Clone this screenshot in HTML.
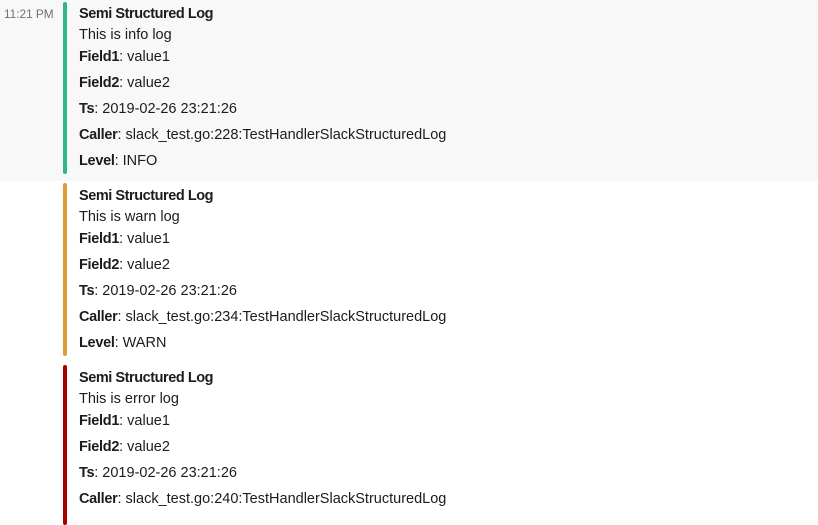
<!DOCTYPE html>
<html><head><meta charset="utf-8"><style>
body{margin:0;width:818px;height:513px;overflow:hidden;background:#fff;font-family:"Liberation Sans",sans-serif;color:#1d1c1d;position:relative}
.bg{position:absolute;left:0;top:0;width:818px;height:181px;background:#f8f8f8}
.time{position:absolute;left:4px;top:7px;font-size:11.8px;color:#717071}
.bar{position:absolute;left:63px;width:4px;border-radius:2px}
.t{position:absolute;left:79px;font-size:14.5px;white-space:nowrap;line-height:18px}
b{font-weight:bold;letter-spacing:-0.3px}
.h b{letter-spacing:-0.45px}
</style></head><body>
<div class="bg"></div>
<div class="time">11:21 PM</div>

<div class="bar" style="top:2px;height:172px;background:#2eb886"></div>
<div class="t h" style="top:5px"><b>Semi Structured Log</b></div>
<div class="t" style="top:26px">This is info log</div>
<div class="t" style="top:48px"><b>Field1</b>: value1</div>
<div class="t" style="top:74px"><b>Field2</b>: value2</div>
<div class="t" style="top:100px"><b>Ts</b>: 2019-02-26 23:21:26</div>
<div class="t" style="top:126px"><b>Caller</b>: slack_test.go:228:TestHandlerSlackStructuredLog</div>
<div class="t" style="top:152px"><b>Level</b>: INFO</div>

<div class="bar" style="top:183px;height:173px;background:#daa038"></div>
<div class="t h" style="top:187px"><b>Semi Structured Log</b></div>
<div class="t" style="top:208px">This is warn log</div>
<div class="t" style="top:230px"><b>Field1</b>: value1</div>
<div class="t" style="top:256px"><b>Field2</b>: value2</div>
<div class="t" style="top:282px"><b>Ts</b>: 2019-02-26 23:21:26</div>
<div class="t" style="top:308px"><b>Caller</b>: slack_test.go:234:TestHandlerSlackStructuredLog</div>
<div class="t" style="top:334px"><b>Level</b>: WARN</div>

<div class="bar" style="top:365px;height:160px;background:#a30200"></div>
<div class="t h" style="top:369px"><b>Semi Structured Log</b></div>
<div class="t" style="top:390px">This is error log</div>
<div class="t" style="top:412px"><b>Field1</b>: value1</div>
<div class="t" style="top:438px"><b>Field2</b>: value2</div>
<div class="t" style="top:464px"><b>Ts</b>: 2019-02-26 23:21:26</div>
<div class="t" style="top:490px"><b>Caller</b>: slack_test.go:240:TestHandlerSlackStructuredLog</div>
</body></html>
